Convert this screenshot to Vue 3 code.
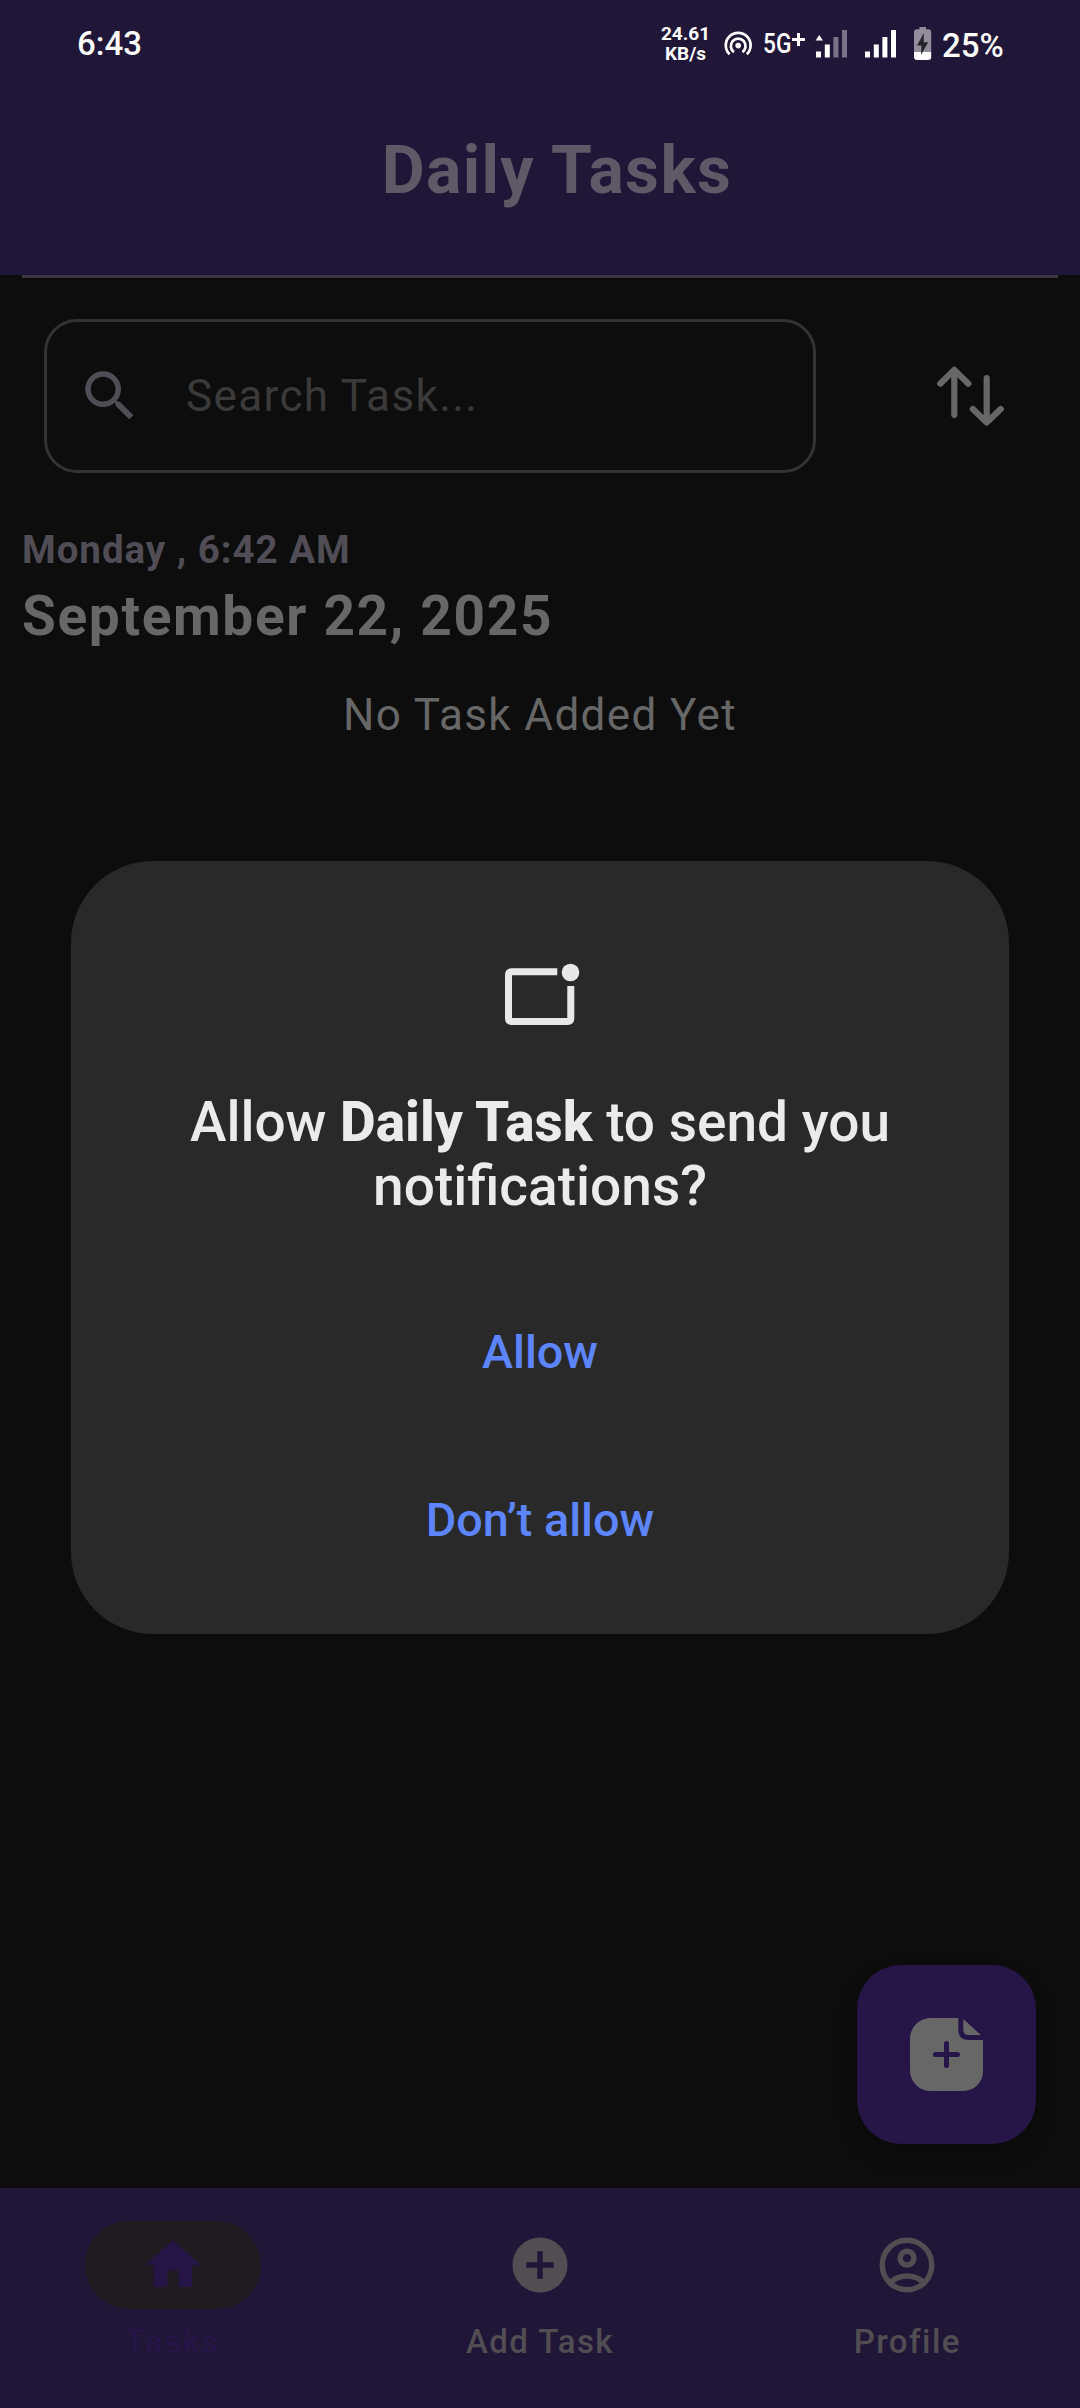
<script setup>
const signalBars = [
  { x: 0, y: 51.5 },
  { x: 8.8, y: 44.5 },
  { x: 17.4, y: 37 },
  { x: 26, y: 30 }
]

const tabs = [
  { label: 'Tasks', active: true, icon: 'M10 20v-6h4v6h5v-8h3L12 3 2 12h3v8z' },
  {
    label: 'Add Task',
    icon: 'M12 2a10 10 0 1 0 0 20 10 10 0 0 0 0-20zm5 11h-4v4h-2v-4H7v-2h4V7h2v4h4z'
  },
  {
    label: 'Profile',
    icon: 'M5.85 17.1q1.275-.975 2.85-1.538T12 15q1.725 0 3.3.563t2.85 1.537q.875-1.025 1.363-2.325T20 12q0-3.325-2.338-5.663T12 4Q8.675 4 6.338 6.338T4 12q0 1.475.488 2.775T5.85 17.1ZM12 13q-1.475 0-2.488-1.013T8.5 9.5q0-1.475 1.013-2.488T12 6q1.475 0 2.488 1.013T15.5 9.5q0 1.475-1.013 2.488T12 13Zm0 9q-2.075 0-3.9-.788t-3.175-2.137q-1.35-1.35-2.137-3.175T2 12q0-2.075.788-3.9t2.137-3.175q1.35-1.35 3.175-2.137T12 2q2.075 0 3.9.788t3.175 2.137q1.35 1.35 2.138 3.175T22 12q0 2.075-.788 3.9t-2.137 3.175q-1.35 1.35-3.175 2.138T12 22Zm0-2q1.325 0 2.5-.387t2.15-1.113q-.975-.725-2.15-1.112T12 17q-1.325 0-2.5.388T7.35 18.5q.975.725 2.15 1.113T12 20Zm0-9q.65 0 1.075-.425T13.5 9.5q0-.65-.425-1.075T12 8q-.65 0-1.075.425T10.5 9.5q0 .65.425 1.075T12 11Z'
  }
]
</script>

<template>
  <div class="screen">
    <header class="header">
      <div class="status">
        <span class="clock">6:43</span>
        <div class="rate"><span>24.61</span><span>KB/s</span></div>
        <svg class="hotspot" width="32" height="90" viewBox="722 0 32 90" fill="none" stroke="#fff" stroke-width="2.7">
          <circle cx="738.2" cy="45.6" r="2.8" fill="#fff" stroke="none" />
          <path d="M734 52.2A7.4 7.4 0 1 1 742.4 52.2" />
          <path d="M729.6 54.2A12.4 12.4 0 1 1 746.8 54.2" />
        </svg>
        <div class="network">
          <span class="gen">5G</span>
          <svg width="14" height="90" viewBox="793 0 14 90" stroke="#fff" stroke-width="3">
            <path d="M793 39.5h13M799.5 33v13" />
          </svg>
        </div>
        <svg class="signal" width="32" height="90" viewBox="816 0 32 90" fill="#fff">
          <path d="M815.6 40.5l3.6-5.5 3.8 5.5z" />
          <rect
            v-for="(bar, i) in signalBars"
            :key="i"
            :x="816 + bar.x"
            :y="bar.y"
            width="5"
            :height="57.5 - bar.y"
            :opacity="i > 1 ? 0.4 : 1"
          />
        </svg>
        <svg class="signal second" width="32" height="90" viewBox="865 0 32 90" fill="#fff">
          <rect
            v-for="(bar, i) in signalBars"
            :key="i"
            :x="865 + bar.x"
            :y="bar.y"
            width="5"
            :height="57.5 - bar.y"
          />
        </svg>
        <svg class="battery" width="18" height="90" viewBox="914 0 18 90">
          <path d="M919.5 27h6.5v2.3h2.2a3 3 0 0 1 3 3V52h-17.2V32.3a3 3 0 0 1 3-3h2.5z" fill="#928c9d" />
          <path d="M914 52h17.2v5a3 3 0 0 1-3 3h-11.2a3 3 0 0 1-3-3z" fill="#fff" />
          <path d="M923.8 33l-6.8 12.5h4.4l-.4 9.5 7.2-12.7h-4.5z" fill="#26242b" />
        </svg>
        <span class="percent">25%</span>
      </div>
      <h1 class="title">Daily Tasks</h1>
    </header>

    <main class="content">
      <hr class="rule" />
      <div class="search-row">
        <div class="search">
          <svg width="66" height="66" viewBox="0 0 24 24" fill="#514d56">
            <path
              d="M15.5 14h-.79l-.28-.27A6.471 6.471 0 0 0 16 9.5 6.5 6.5 0 1 0 9.5 16c1.61 0 3.09-.59 4.23-1.57l.27.28v.79l5 4.99L20.49 19l-4.99-5zm-6 0C7.01 14 5 11.99 5 9.5S7.01 5 9.5 5 14 7.01 14 9.5 11.99 14 9.5 14z"
            />
          </svg>
          <span class="placeholder">Search Task...</span>
        </div>
        <svg
          class="sort"
          width="70"
          height="60"
          viewBox="936 366 70 60"
          fill="none"
          stroke="#676767"
          stroke-width="6.2"
          stroke-linecap="round"
          stroke-linejoin="round"
        >
          <path d="M954.3 414.8V370.4M940.2 383.7l14.1-13.8 14.1 13.8" />
          <path d="M986.7 378v44M972.8 409.1l13.9 13.3 14.1-13.3" />
        </svg>
      </div>
      <p class="day">Monday , 6:42 AM</p>
      <p class="date">September 22, 2025</p>
      <p class="empty">No Task Added Yet</p>
    </main>

    <nav class="nav">
      <div v-for="tab in tabs" :key="tab.label" class="tab" :class="{ active: tab.active }">
        <span class="pill">
          <svg width="66" height="66" viewBox="0 0 24 24" fill="currentColor" fill-rule="evenodd">
            <path :d="tab.icon" />
          </svg>
        </span>
        <span class="label">{{ tab.label }}</span>
      </div>
    </nav>

    <button class="fab">
      <svg width="74" height="74" viewBox="910 2018 74 74">
        <path
          d="M930.5 2018H958.3V2029.5Q958.3 2040 968.5 2040H983V2071.5A19.5 19.5 0 0 1 963.5 2091H930.5A20.5 20.5 0 0 1 910 2070.5V2038.5A20.5 20.5 0 0 1 930.5 2018Z"
          fill="#676767"
        />
        <path d="M963.3 2019L980.8 2035H968.5Q963.3 2035 963.3 2029.5Z" fill="#676767" />
        <path d="M935.5 2054.5h22M946.5 2043.5v22" stroke="#261547" stroke-width="5" stroke-linecap="round" />
      </svg>
    </button>

    <section class="dialog">
      <svg class="bell" width="76" height="64" viewBox="504 962 76 64" fill="none" stroke="#e8e8e8" stroke-width="7">
        <path d="M557.3 971.8H511.7Q508.5 971.8 508.5 975V1018.2Q508.5 1021.4 511.7 1021.4H567.6Q570.8 1021.4 570.8 1018.2V986" />
        <circle cx="570.5" cy="972.5" r="8.8" fill="#e8e8e8" stroke="none" />
      </svg>
      <p class="question">Allow <b>Daily Task</b> to send you<br />notifications?</p>
      <button class="action">Allow</button>
      <button class="action">Don’t allow</button>
    </section>
  </div>
</template>

<style>
body {
  margin: 0;
  background: #0d0d0d;
}
</style>

<style scoped>
.screen {
  position: relative;
  display: flex;
  flex-direction: column;
  width: 1080px;
  height: 2408px;
  overflow: hidden;
  background: #0d0d0d;
  font-family: Roboto, 'Liberation Sans', sans-serif;
  white-space: nowrap;
}
svg {
  display: block;
  flex: none;
}
p,
h1 {
  margin: 0;
}
button {
  border: 0;
  padding: 0;
  background: none;
  font: inherit;
}
.header {
  height: 275px;
  flex: none;
  background: #201637;
}
.status {
  display: flex;
  height: 90px;
  color: #fff;
}
.clock {
  width: 582px;
  padding-left: 77px;
  font-size: 33px;
  font-weight: 500;
  line-height: 87px;
}
.rate {
  display: flex;
  flex-direction: column;
  align-items: center;
  width: 53px;
  padding-top: 24px;
  font-size: 19px;
  font-weight: 700;
  line-height: 20px;
}
.hotspot {
  margin-left: 10px;
}
.network {
  display: flex;
  width: 54px;
  padding-left: 9px;
}
.gen {
  width: 30px;
  font-size: 28px;
  font-weight: 500;
  line-height: 87px;
  transform: scaleX(0.81);
  transform-origin: left;
}
.network svg {
  overflow: visible;
  margin-left: -1px;
}
.signal {
  overflow: visible;
  margin-left: -1px;
}
.signal.second {
  margin-left: 17px;
}
.battery {
  margin-left: 17px;
}
.percent {
  margin-left: 10px;
  font-size: 33px;
  font-weight: 500;
  line-height: 91px;
}
.title {
  padding-left: 34px;
  color: #5f5967;
  font-size: 66px;
  font-weight: 700;
  line-height: 80px;
  padding-top: 41px;
  letter-spacing: 1.38px;
  text-align: center;
}
.content {
  flex: 1;
}
.rule {
  height: 3px;
  margin: 0 22px;
  border: 0;
  background: #3b3541;
}
.search-row {
  display: flex;
  align-items: center;
  margin: 41px 0 0 44px;
}
.search {
  display: flex;
  align-items: center;
  box-sizing: border-box;
  width: 772px;
  height: 154px;
  padding-left: 30px;
  border: 3px solid #333;
  border-radius: 33px;
}
.placeholder {
  margin-left: 43px;
  color: #3a3a3a;
  font-size: 44px;
  line-height: 52px;
  letter-spacing: 1.38px;
}
.sort {
  margin-left: 120px;
}
.day,
.date {
  padding-left: 22px;
}
.day {
  margin-top: 51px;
  color: #514d56;
  font-size: 38.5px;
  font-weight: 700;
  line-height: 52px;
  letter-spacing: 0.96px;
}
.date {
  margin-top: 8px;
  color: #676767;
  font-size: 55px;
  font-weight: 700;
  line-height: 64px;
  letter-spacing: 1.65px;
}
.empty {
  margin-top: 41px;
  color: #676767;
  font-size: 44px;
  line-height: 52px;
  letter-spacing: 1.38px;
  text-align: center;
}
.nav {
  display: flex;
  gap: 22px;
  height: 220px;
  background: #201637;
}
.tab {
  display: flex;
  flex: 1;
  flex-direction: column;
  align-items: center;
  padding-top: 33px;
  color: #514d53;
}
.pill {
  display: flex;
  align-items: center;
  justify-content: center;
  width: 176px;
  height: 88px;
  border-radius: 44px;
}
.label {
  margin-top: 11px;
  font-size: 33px;
  font-weight: 500;
  line-height: 44px;
  letter-spacing: 1.45px;
}
.active {
  color: #261547;
}
.active .pill {
  background: #1e1b21;
}
.fab {
  position: absolute;
  right: 44px;
  bottom: 264px;
  display: flex;
  align-items: center;
  justify-content: center;
  width: 179px;
  height: 179px;
  border-radius: 44px;
  background: #261547;
  box-shadow: 0 12px 22px rgba(0, 0, 0, 0.2);
}
.dialog {
  position: absolute;
  top: 861px;
  left: 71px;
  display: flex;
  flex-direction: column;
  align-items: center;
  width: 938px;
  height: 773px;
  border-radius: 82px;
  background: #292929;
}
.bell {
  margin: 101px 0 0 4px;
}
.question {
  width: 720px;
  margin-top: 64px;
  color: #ebebeb;
  font-size: 55px;
  font-weight: 500;
  line-height: 64.4px;
  text-align: center;
}
.question b {
  font-weight: 800;
}
.action {
  height: 154px;
  color: #5c85ff;
  font-size: 46.75px;
  font-weight: 500;
  line-height: 154px;
}
.question + .action {
  margin: 56px 0 14px;
}
</style>
